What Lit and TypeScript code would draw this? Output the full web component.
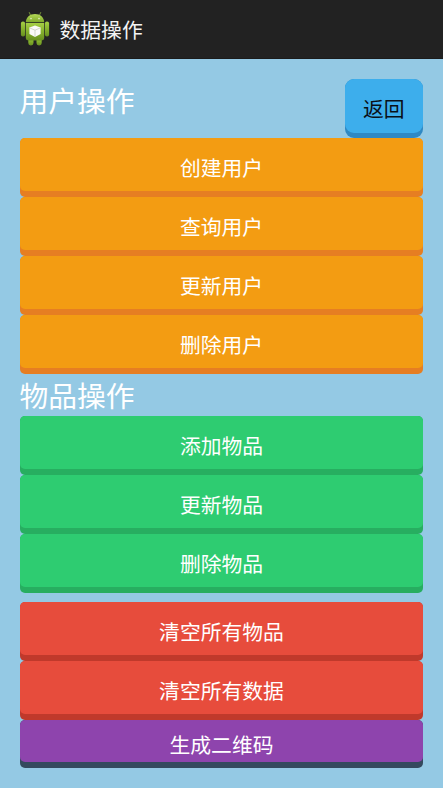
import { LitElement, html, css, svg } from "lit";
import { customElement, property } from "lit/decorators.js";

const robot = svg`
  <defs>
    <linearGradient id="skin" x1="0" y1="0" x2="0" y2="1">
      <stop offset="0" stop-color="#a5cf45" />
      <stop offset="0.5" stop-color="#86b22d" />
      <stop offset="1" stop-color="#678f1f" />
    </linearGradient>
    <linearGradient id="dome" x1="0" y1="0" x2="0" y2="1">
      <stop offset="0" stop-color="#b4d957" />
      <stop offset="1" stop-color="#7fa92b" />
    </linearGradient>
  </defs>
  <path d="M9.3 1.5 L10.8 4.8 M20.7 1.5 L19.2 4.8" stroke="#7f9f3c" stroke-width="0.9" stroke-linecap="round" />
  <path d="M5.8 11.3 C6 6.2 9.8 2.9 15 2.9 C20.2 2.9 24 6.2 24.2 11.3 Z" fill="url(#dome)" />
  <g fill="url(#skin)">
    <rect x="0.9" y="10.6" width="4.2" height="14.8" rx="2" />
    <rect x="24.9" y="10.6" width="4.2" height="14.8" rx="2" />
    <rect x="8.3" y="26" width="5.2" height="8.5" rx="2.4" />
    <rect x="16.5" y="26" width="5.2" height="8.5" rx="2.4" />
    <path d="M5.8 12 H24.2 V27 Q24.2 29.4 21.8 29.4 H8.2 Q5.8 29.4 5.8 27 Z" />
  </g>
  <circle cx="11" cy="7.6" r="0.8" fill="#e6f0cc" />
  <circle cx="19" cy="7.6" r="0.8" fill="#e6f0cc" />
  <path d="M15 14.6 L20.6 16.6 V23 L15 26 L9.4 23 V16.6 Z" fill="#fafaf8" />
  <path d="M9.4 16.8 L15 19.2 L20.6 16.8 M15 19.2 V25.8" fill="none" stroke="#c3c8b8" stroke-width="0.7" />
`;

@customElement("slab-button")
class SlabButton extends LitElement {
  @property({ reflect: true }) tone = "orange";

  static styles = css`
    :host {
      --face: #f39c12;
      --edge: #e67e22;
      --r: 5px;
      display: block;
      height: 59.1px;
    }
    :host([tone="green"]) { --face: #2ecc71; --edge: #27ae60; }
    :host([tone="red"]) { --face: #e74c3c; --edge: #c0392b; }
    :host([tone="purple"]) { --face: #8e44ad; --edge: #34495e; height: 48.6px; }
    :host([tone="blue"]) { --face: #3daeec; --edge: #2f89c4; --r: 9px; height: 58.5px; width: 78.5px; }
    .edge {
      box-sizing: border-box;
      width: 100%;
      height: 100%;
      padding: 0 0 6px;
      border: 0;
      border-radius: var(--r);
      background: var(--edge);
      display: flex;
      font: inherit;
      color: #fff;
    }
    .face {
      flex: 1;
      display: flex;
      align-items: center;
      justify-content: center;
      border-radius: var(--r);
      background: var(--face);
      font-size: 20.8px;
      line-height: 30px;
      padding-top: 5px;
    }
    :host([tone="blue"]) .edge { padding-bottom: 5px; }
    :host([tone="blue"]) .face { color: #0a1018; padding-top: 4px; }
  `;

  render() {
    return html`<button class="edge"><span class="face"><slot></slot></span></button>`;
  }
}

@customElement("app-root")
class AppRoot extends LitElement {
  static styles = css`
    :host {
      display: flex;
      flex-direction: column;
      height: 100vh;
      overflow: hidden;
      background: #94c9e4;
      font-family: "Noto Sans CJK SC", sans-serif;
      color: #fff;
    }
    .bar {
      flex: none;
      box-sizing: border-box;
      height: 59px;
      padding-left: 20px;
      display: flex;
      align-items: center;
      gap: 9.5px;
      background: #222;
      border-bottom: 1px solid #1b1b1b;
      color: #f3f3f3;
      font-size: 20.8px;
    }
    .logo { width: 30px; height: 36px; }
    .content {
      flex: none;
      padding: 20px 20px 0;
      display: flex;
      flex-direction: column;
    }
    .top {
      display: flex;
      justify-content: space-between;
      height: 59px;
    }
    h2 {
      margin: 0 0 0 -0.6px;
      font-weight: 400;
      font-size: 28.8px;
      line-height: 42px;
      height: 41.3px;
    }
    .danger { margin-top: 8.6px; }
  `;

  private group(tone: string, labels: string[]) {
    return labels.map((label) => html`<slab-button tone=${tone}>${label}</slab-button>`);
  }

  render() {
    return html`
      <header class="bar">
        <svg class="logo" viewBox="0 0 30 36">${robot}</svg>
        <span>数据操作</span>
      </header>
      <main class="content">
        <div class="top">
          <h2>用户操作</h2>
          <slab-button tone="blue">返回</slab-button>
        </div>
        ${this.group("orange", ["创建用户", "查询用户", "更新用户", "删除用户"])}
        <h2>物品操作</h2>
        ${this.group("green", ["添加物品", "更新物品", "删除物品"])}
        <div class="danger">
          ${this.group("red", ["清空所有物品", "清空所有数据"])}
          ${this.group("purple", ["生成二维码"])}
        </div>
      </main>
    `;
  }
}
